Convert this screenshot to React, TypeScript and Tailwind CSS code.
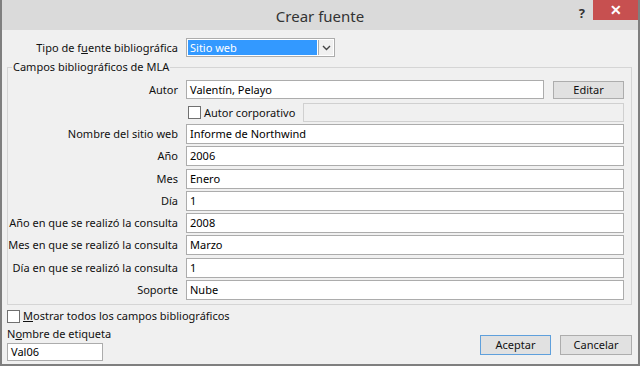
import React from 'react'

const rows = [
  { label: 'Nombre del sitio web', value: 'Informe de Northwind' },
  { label: 'Año', value: '2006' },
  { label: 'Mes', value: 'Enero' },
  { label: 'Día', value: '1' },
  { label: 'Año en que se realizó la consulta', value: '2008' },
  { label: 'Mes en que se realizó la consulta', value: 'Marzo' },
  { label: 'Día en que se realizó la consulta', value: '1' },
  { label: 'Soporte', value: 'Nube' },
]

function Checkbox() {
  return <span className="block h-[13px] w-[13px] shrink-0 border border-[#707070] bg-white" />
}

function Field({ value, className = '' }: { value: string; className?: string }) {
  return (
    <div className={`flex items-center border border-[#acacac] bg-white px-[3px] text-black ${className}`}>
      {value}
    </div>
  )
}

export default function App() {
  return (
    <div className="flex h-[366px] w-[640px] flex-col overflow-hidden border-x-2 border-b-2 border-[#7f7f7f] bg-[#f0f0f0] font-['Noto_Sans',sans-serif] text-[11px] leading-[16px] text-[#111]">
      {/* title bar */}
      <div className="grid h-[30px] shrink-0 grid-cols-[1fr_auto_1fr] bg-[#dadada]">
        <div />
        <div className="flex items-center pt-[2px] text-[15px] text-[#333]">Crear fuente</div>
        <div className="flex items-start justify-end">
          <span className="mr-[8px] mt-[5px] text-[13px] font-bold text-[#333]">?</span>
          <button className="flex h-[20px] w-[45px] items-center justify-center bg-[#c75050] text-[14px] font-bold leading-none text-white">
            ✕
          </button>
        </div>
      </div>

      {/* tipo de fuente */}
      <div className="mt-[8px] flex items-center pl-[6px]">
        <span className="w-[170px] text-right">
          Tipo de f<span className="underline">u</span>ente bibliográfica
        </span>
        <div className="ml-[8px] flex h-[19px] w-[149px] border border-[#acacac] bg-white">
          <div className="m-[1px] flex flex-1 items-center bg-[#3399ff] px-[2px] text-white">Sitio web</div>
          <div className="my-[1px] mr-[1px] flex w-[15px] items-center justify-center border-l border-[#acacac] bg-[#f0f0f0]">
            <svg width="9" height="6" viewBox="0 0 9 6">
              <path d="M1 1l3.5 3.5L8 1" fill="none" stroke="#444" strokeWidth="1.4" />
            </svg>
          </div>
        </div>
      </div>

      {/* campos */}
      <fieldset className="ml-[5px] mr-[6px] mt-[2px] border border-[#d5d5d5] pb-[4px] pr-[7px]">
        <legend className="ml-[4px] px-[1px]">Campos bibliográficos de MLA</legend>

        <div className="mt-[5px] flex h-[19px] items-center">
          <span className="w-[170px] shrink-0 text-right">Autor</span>
          <Field value="Valentín, Pelayo" className="ml-[8px] h-[19px] flex-1" />
          <button className="ml-[9px] h-[18px] w-[71px] border border-[#adadad] bg-[#e1e1e1] text-[#111]">
            Editar
          </button>
        </div>

        <div className="mt-[4px] flex h-[19px] items-center">
          <div className="ml-[180px] flex w-[115px] items-center gap-[3px]">
            <Checkbox />
            <span>Autor corporativo</span>
          </div>
          <div className="h-[19px] flex-1 border border-[#d0d0d0] bg-[#f0f0f0]" />
        </div>

        <div className="mt-[2px] flex flex-col gap-[2.3px]">
          {rows.map((r) => (
            <div key={r.label} className="flex h-[20px] items-center">
              <span className="w-[170px] shrink-0 text-right">{r.label}</span>
              <Field value={r.value} className="ml-[8px] h-[20px] flex-1" />
            </div>
          ))}
        </div>
      </fieldset>

      {/* bottom */}
      <div className="mt-[3px] flex h-[16px] items-center gap-[3px] pl-[5px]">
        <Checkbox />
        <span>
          <span className="underline">M</span>ostrar todos los campos bibliográficos
        </span>
      </div>
      <div className="flex items-end justify-between pl-[5px] pr-[6px]">
        <div className="flex flex-col">
          <span className="mt-[2px]">
            N<span className="underline">o</span>mbre de etiqueta
          </span>
          <Field value="Val06" className="mt-[1px] h-[18px] w-[96px]" />
        </div>
        <div className="mb-[6px] flex gap-[9px]">
          <button className="h-[20px] w-[71px] border border-[#5fa0dc] bg-[#e1e1e1] text-[#111]">Aceptar</button>
          <button className="h-[20px] w-[72px] border border-[#adadad] bg-[#e1e1e1] text-[#111]">Cancelar</button>
        </div>
      </div>
    </div>
  )
}
